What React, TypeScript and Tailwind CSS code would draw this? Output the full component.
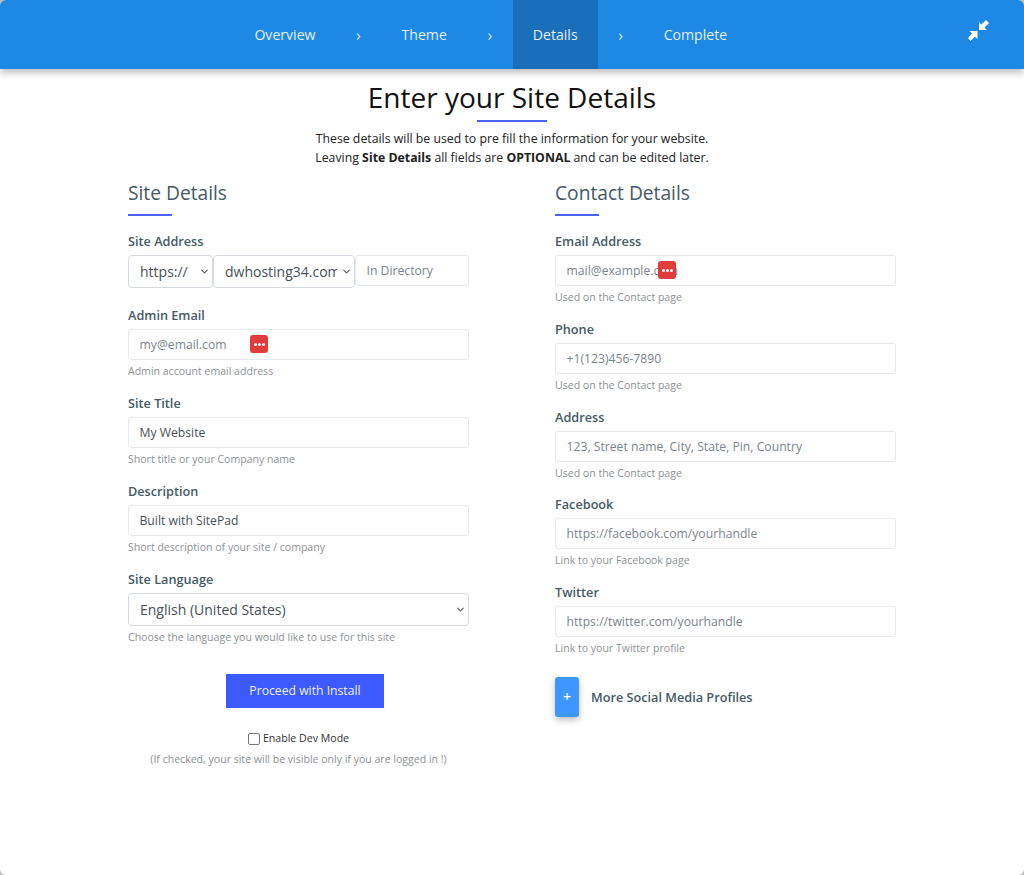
import { ChevronDown } from "lucide-react";

const font = { fontFamily: '"Open Sans", sans-serif' };

const inputCls =
  "block w-full h-[31px] rounded-[3px] border border-[#e6e9ee] bg-white px-[10.5px] text-[12.2px] text-[#495057] placeholder:text-[#7d858c] outline-none";

const Select = ({ value, width }: { value: string; width: string }) => (
  <div className={`relative ${width}`}>
    <select
      className="block h-[33px] w-full appearance-none rounded-[4px] border border-[#d5dae0] bg-white pr-[17px] pl-[11px] text-[14px] text-[#495057] outline-none"
      defaultValue={value}
    >
      <option>{value}</option>
    </select>
    <ChevronDown className="pointer-events-none absolute top-[11px] right-[3px] h-[11px] w-[11px] text-[#555]" strokeWidth={2.2} />
  </div>
);

const PassIcon = ({ left }: { left: number }) => (
  <span
    className="absolute top-[6px] flex h-[18px] w-[18px] items-center justify-center gap-[1px] rounded-[3px] bg-[#e03c3c]"
    style={{ left }}
  >
    <i className="h-[3px] w-[3px] rounded-full bg-white" />
    <i className="h-[3px] w-[3px] rounded-full bg-white" />
    <i className="h-[3px] w-[3px] rounded-full bg-white" />
  </span>
);

const Label = ({ children }: { children: string }) => (
  <label className="block h-[23px] text-[12.7px] leading-[19px] font-semibold text-[#455a64]">{children}</label>
);

const Hint = ({ children }: { children: string }) => (
  <p className="mt-[3px] h-[16px] text-[10.55px] leading-[16px] text-[#8e9296]">{children}</p>
);

const Field = ({
  label,
  hint,
  placeholder,
  value,
  icon,
  tight,
}: {
  label: string;
  hint: string;
  placeholder?: string;
  value?: string;
  icon?: number;
  tight?: boolean;
}) => (
  <div className={tight ? "mb-[14.75px]" : "mb-[15px]"}>
    <Label>{label}</Label>
    <div className="relative">
      <input className={inputCls} placeholder={placeholder} defaultValue={value} />
      {icon !== undefined && <PassIcon left={icon} />}
    </div>
    <Hint>{hint}</Hint>
  </div>
);

const SectionTitle = ({ children }: { children: string }) => (
  <div className="mb-[16px]">
    <h3 className="text-[19.2px] leading-[26px] text-[#455a64]">{children}</h3>
    <div className="mt-[8px] h-[2px] w-[44px] bg-[#4a63f5]" />
  </div>
);

const Arrow = () => <span className="flex w-[46px] justify-center text-[16px] text-[#d6e8fa]">›</span>;

const NavItem = ({ children, active }: { children: string; active?: boolean }) => (
  <span className={`flex h-full items-center px-[20px] text-[14.1px] text-[#e3f0fc] ${active ? "bg-[#1a6fbb]" : ""}`}>
    {children}
  </span>
);

export default function App() {
  return (
    <div className="h-[875px] overflow-hidden bg-[#bbb]" style={font}>
      <div className="h-full overflow-hidden rounded-[6px] bg-white">
        <header className="relative flex h-[69px] items-center bg-[#1e88e5] pl-[234.4px] pr-[34px] shadow-[0_3px_8px_rgba(0,0,0,0.3)]">
          <nav className="flex h-full items-center">
            <NavItem>Overview</NavItem>
            <Arrow />
            <NavItem>Theme</NavItem>
            <Arrow />
            <NavItem active>Details</NavItem>
            <Arrow />
            <NavItem>Complete</NavItem>
          </nav>
          <svg className="ml-auto mt-[20px] self-start" width="22" height="22" viewBox="0 0 22 22" fill="white">
            <path d="M11 10V2l2.500 2.500L18 0l3 3-4.500 4.500L19 10z" />
            <path d="M9.500 11v8L7 16.500 2.500 21 0 18l4-4.500L1.500 11z" />
          </svg>
        </header>

        <main className="mx-auto w-[768px]">
          <div className="pt-[9px] text-center">
            <h1 className="text-[28px] leading-[38px] text-[#111]">Enter your Site Details</h1>
            <div className="mx-auto mt-[4px] h-[2px] w-[70px] bg-[#4a63f5]" />
            <p className="mt-[7px] text-[12.3px] leading-[19px] text-[#222]">
              These details will be used to pre fill the information for your website.
              <br />
              Leaving <b className="font-bold">Site Details</b> all fields are <b className="font-bold">OPTIONAL</b> and
              can be edited later.
            </p>
          </div>

          <div className="mt-[13px] grid grid-cols-2 gap-[86px]">
            <section>
              <SectionTitle>Site Details</SectionTitle>
              <div className="mb-[18px]">
                <Label>Site Address</Label>
                <div className="flex items-start">
                  <Select value="https://" width="w-[85px]" />
                  <Select value="dwhosting34.com" width="w-[142px]" />
                  <input className={`${inputCls} !w-[114px]`} placeholder="In Directory" />
                </div>
              </div>
              <Field label="Admin Email" hint="Admin account email address" placeholder="my@email.com" icon={122} />
              <Field label="Site Title" hint="Short title or your Company name" value="My Website" />
              <Field label="Description" hint="Short description of your site / company" value="Built with SitePad" />
              <div>
                <Label>Site Language</Label>
                <Select value="English (United States)" width="w-full" />
                <Hint>Choose the language you would like to use for this site</Hint>
              </div>
              <div className="mt-[29px] flex flex-col items-center">
                <button className="ml-[13px] h-[34px] w-[158px] bg-[#3d5afe] text-[12.2px] text-[#eef1ff]">
                  Proceed with Install
                </button>
                <label className="mt-[23px] flex h-[16px] items-center gap-[2px] text-[10.6px] text-[#333]">
                  <span className="h-[12px] w-[12px] rounded-[2px] border-[1.5px] border-[#777] bg-white" />
                  <span className="ml-[1px]">Enable Dev Mode</span>
                </label>
                <p className="mt-[4px] text-[10.55px] leading-[16px] text-[#8e9296]">
                  (If checked, your site will be visible only if you are logged in !)
                </p>
              </div>
            </section>

            <section>
              <SectionTitle>Contact Details</SectionTitle>
              <Field tight label="Email Address" hint="Used on the Contact page" placeholder="mail@example.com" icon={103} />
              <Field tight label="Phone" hint="Used on the Contact page" placeholder="+1(123)456-7890" />
              <Field tight label="Address" hint="Used on the Contact page" placeholder="123, Street name, City, State, Pin, Country" />
              <Field tight label="Facebook" hint="Link to your Facebook page" placeholder="https://facebook.com/yourhandle" />
              <Field label="Twitter" hint="Link to your Twitter profile" placeholder="https://twitter.com/yourhandle" />
              <div className="mt-[21px] flex items-center gap-[12px]">
                <button className="h-[40px] w-[24px] rounded-[3px] bg-[#3d97ff] text-[14px] leading-none font-semibold text-white shadow-[0_3px_6px_rgba(0,0,0,0.25)]">
                  +
                </button>
                <span className="translate-y-[1px] text-[12.7px] font-semibold text-[#455a64]">More Social Media Profiles</span>
              </div>
            </section>
          </div>
        </main>
      </div>
    </div>
  );
}
